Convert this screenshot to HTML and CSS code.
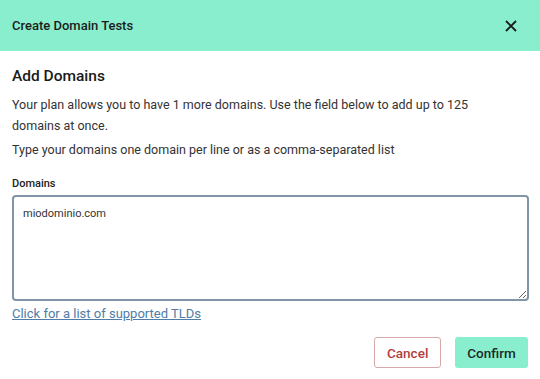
FILE: index.html
```html
<!DOCTYPE html>
<html lang="en">
<head>
    <meta charset="UTF-8">
    <meta name="viewport" content="width=device-width, initial-scale=1.0">
    <title>Create Domain Tests</title>
    <link rel="stylesheet" href="styles.css">
</head>
<body>
    <div class="dialog">
        <div class="dialog-header">
            <span class="dialog-title">Create Domain Tests</span>
            <button class="close-btn" aria-label="Close">
                <svg width="12" height="12" viewBox="0 0 12 12"><path d="M1 1L11 11M11 1L1 11" stroke="#1a1a1a" stroke-width="1.8" fill="none"/></svg>
            </button>
        </div>
        <div class="dialog-body">
            <h2>Add Domains</h2>
            <p class="intro">Your plan allows you to have 1 more domains. Use the field below to add up to 125 domains at once.</p>
            <p>Type your domains one domain per line or as a comma-separated list</p>
            <label class="field-label" for="domains">Domains</label>
            <textarea id="domains" class="domains-input">miodominio.com</textarea>
            <a href="#" class="tld-link">Click for a list of supported TLDs</a>
        </div>
        <div class="dialog-footer">
            <button class="btn btn-cancel">Cancel</button>
            <button class="btn btn-confirm">Confirm</button>
        </div>
    </div>
</body>
</html>
```

FILE: styles.css
```css
* {
    box-sizing: border-box;
}
body {
    margin: 0;
    background: #ffffff;
    font-family: Roboto, "Liberation Sans", sans-serif;
    color: #222;
}
.dialog {
    width: 540px;
    height: 379px;
    display: flex;
    flex-direction: column;
}
.dialog-header {
    height: 51px;
    background: #89eecd;
    display: flex;
    align-items: center;
    justify-content: space-between;
    padding: 0 23px 0 12px;
}
.dialog-title {
    font-size: 13px;
    font-weight: 500;
    color: #1c1c1c;
}
.close-btn {
    background: none;
    border: none;
    padding: 0;
    display: flex;
    cursor: pointer;
}
.dialog-body {
    padding: 14px 11px 0 12px;
    display: flex;
    flex-direction: column;
}
.dialog-body h2 {
    margin: 0 0 7px;
    font-size: 15.5px;
    font-weight: 500;
    color: #1a1a1a;
    line-height: 22px;
}
.dialog-body p {
    margin: 0 0 3px;
    font-size: 12.5px;
    line-height: 21px;
    color: #333;
}
.dialog-body .intro {
    max-width: 500px;
}
.field-label {
    margin-top: 14px;
    font-size: 11px;
    font-weight: 500;
    color: #222;
    line-height: 13px;
}
.domains-input {
    margin-top: 5px;
    width: 517px;
    height: 106px;
    border: 2px solid #8195a6;
    border-radius: 4px;
    padding: 10px 9px;
    font-family: Roboto, "Liberation Sans", sans-serif;
    font-size: 11px;
    color: #333;
    resize: vertical;
    outline: none;
}
.tld-link {
    margin-top: 4px;
    font-size: 13px;
    color: #4f7ca6;
    line-height: 18px;
    align-self: flex-start;
}
.dialog-footer {
    display: flex;
    justify-content: flex-end;
    gap: 14px;
    padding: 14px 12px 0;
}
.btn {
    height: 31px;
    border-radius: 3px;
    font-family: Roboto, "Liberation Sans", sans-serif;
    font-size: 13.5px;
    font-weight: 500;
    cursor: pointer;
    padding: 0 12px;
}
.btn-cancel {
    background: #fff;
    border: 1px solid #d6a8a8;
    color: #b13d3d;
    width: 67px;
}
.btn-confirm {
    background: #89eecd;
    border: none;
    color: #1c2a28;
    width: 73px;
}
```
